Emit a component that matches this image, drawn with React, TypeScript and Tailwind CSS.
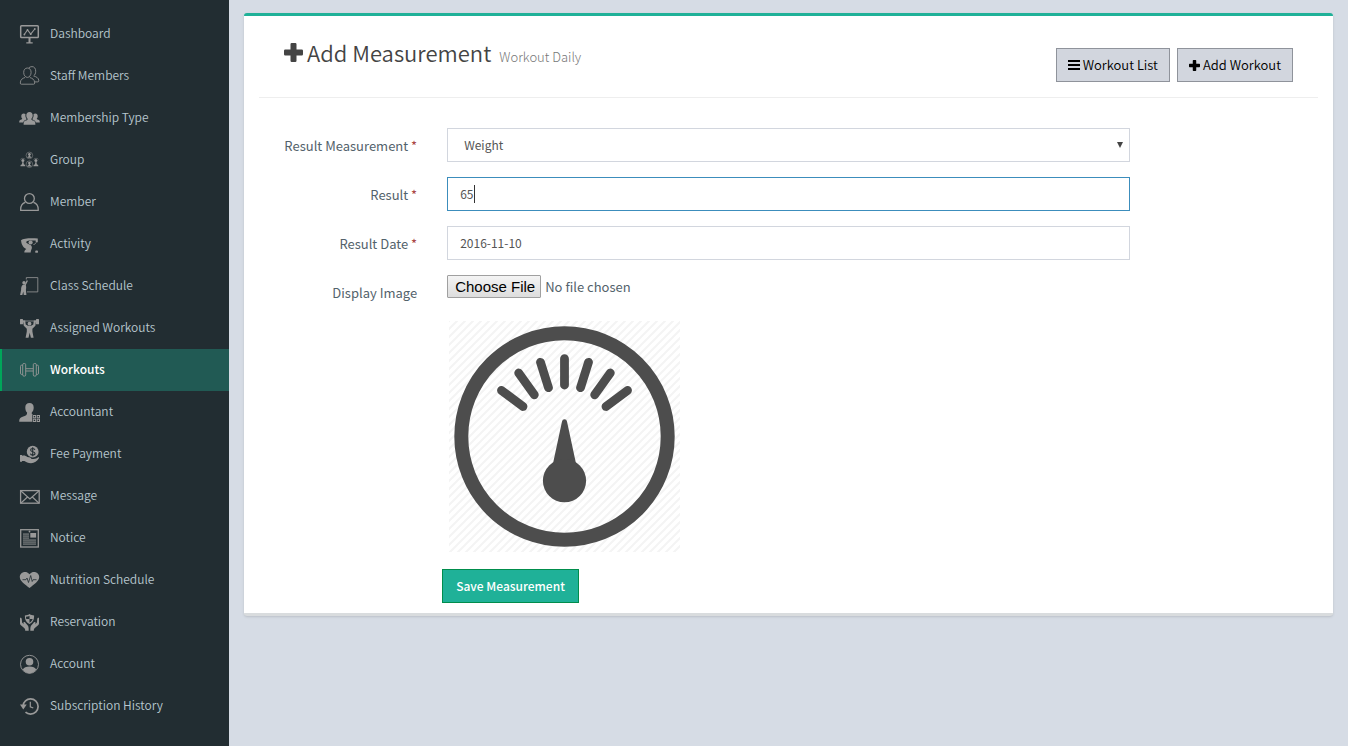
import React, { useState } from "react";

const S = { fill: "none", stroke: "currentColor" } as const;

function Icon({ children }: { children: React.ReactNode }) {
  return (
    <svg viewBox="0 0 20 20" className="h-5 w-5 shrink-0 overflow-visible text-[#999999]" fill="currentColor" aria-hidden="true">
      {children}
    </svg>
  );
}

const MiniPerson = ({ x, y }: { x: number; y: number }) => (
  <g>
    <circle cx={x} cy={y} r="3.3" {...S} strokeWidth="0.7" opacity="0.7" />
    <circle cx={x} cy={y - 1.2} r="1.3" />
    <path d={`M${x - 2} ${y + 2.4}c.2-1 .6-1.3 1.3-1.5v-1.5h1.4v1.5c.7.2 1.1.5 1.3 1.5z`} />
  </g>
);

const items: { label: string; icon: React.ReactNode }[] = [
  {
    label: "Dashboard",
    icon: (
      <>
        <rect x="0.7" y="1.7" width="17.6" height="11.8" rx="0.8" {...S} strokeWidth="1.5" />
        <path d="M4.3 10.5 7.5 6l3.2 4.2L14.8 5" {...S} strokeWidth="1.1" />
        <circle cx="4.4" cy="10.5" r="0.9" />
        <circle cx="7.5" cy="6" r="0.9" />
        <circle cx="10.7" cy="10.2" r="0.9" />
        <circle cx="14.8" cy="5" r="0.9" />
        <path d="M8.5 14h2v4.2h2.2v1.4H6.3v-1.4h2.2z" />
      </>
    ),
  },
  {
    label: "Staff Members",
    icon: (
      <g {...S} strokeWidth="0.9" opacity="0.9">
        <path d="M7.4 2c2.3 0 3.7 1.8 3.7 4.4 0 2.7-1.6 5-3.7 5S3.7 9.100 3.7 6.400C3.7 3.800 5.100 2 7.400 2z" />
        <path d="M5 11.500c-2.200.8-4.700 1.800-4.700 5.500 0 .8.3 1.200 1.100 1.200h12.200c.8 0 1.100-.4 1.100-1.200 0-3.700-2.600-4.700-4.900-5.500" />
        <path d="M8.800 1.800C9.600 1.100 10.700.6 12 .6c2.500 0 3.700 2 3.700 4.700 0 2-.8 3.700-2 4.600 2.600 1 5.100 1.900 5.100 4.900 0 .8-.4 1.100-1 1.100h-3" />
      </g>
    ),
  },
  {
    label: "Membership Type",
    icon: (
      <>
        <path d="M9.500 4c2 0 3.200 1.300 3.200 3.400 0 1.500-.6 2.800-1.500 3.500.1.900 1 1.300 2.200 1.700 1.400.5 2 1.600 2 4.200H3.600c0-2.600.6-3.700 2-4.200 1.200-.4 2.100-.8 2.200-1.700-.9-.7-1.500-2-1.500-3.500C6.300 5.300 7.500 4 9.500 4z" />
        <path d="M3.600 5.500c.8 0 1.500.3 1.900.8-.4 1.800.1 3.500 1.200 4.900-.6.800-3 .9-3.500 3.200h-4c0-1.600.5-2.200 1.600-2.600.9-.3 1.400-.6 1.400-1.200-.6-.5-.9-1.400-.9-2.400 0-1.600.9-2.700 2.300-2.700z" />
        <path d="M15.400 5.500c-.8 0-1.500.3-1.900.8.4 1.800-.1 3.500-1.200 4.900.6.800 3 .9 3.500 3.200h4c0-1.600-.5-2.200-1.600-2.600-.9-.3-1.400-.6-1.400-1.200.6-.5.9-1.400.9-2.400 0-1.600-.9-2.700-2.300-2.700z" />
      </>
    ),
  },
  {
    label: "Group",
    icon: (
      <>
        <MiniPerson x={9.4} y={5.4} />
        <MiniPerson x={9.4} y={14.2} />
        <circle cx="2.9" cy="10.4" r="1.5" />
        <path d="M.4 16.200c.1-1.300.9-1.700 1.700-1.900v-2h1.600v2c.8.200 1.600.6 1.700 1.900zM13.400 16.200c.1-1.300.9-1.700 1.700-1.900v-2h1.600v2c.8.200 1.600.6 1.700 1.900z" />
        <circle cx="15.9" cy="10.4" r="1.5" />
        <path d="M.3 9.500a3.200 3.200 0 0 1 5 0M13.500 9.500a3.200 3.200 0 0 1 5 0" {...S} strokeWidth="0.6" opacity="0.7" />
      </>
    ),
  },
  {
    label: "Member",
    icon: (
      <g {...S} strokeWidth="1.3">
        <circle cx="9.4" cy="6.5" r="4.9" />
        <path d="M5.300 10.300C2.200 11.300.7 13.900.7 17.300v1h17.500v-1c0-3.400-1.500-6-4.700-7" />
      </g>
    ),
  },
  {
    label: "Activity",
    icon: (
      <>
        <path d="M1 6.200C3.500 4.500 9 4.100 17.800 4.500v3.800h-2.100V6.500H9.200c-1 .4-2.800.5-3 1.500-.2.800.9 1.300 2.300 2 2 .8 3.400 1.700 3.400 3.500 0 1.700-1.200 2.700-1.200 5H4.300c0-1.800.6-2.600 2-3.600C2.600 13.300 1.400 9.800 1 6.200z" />
        <circle cx="10.6" cy="8.5" r="2.1" />
        <rect x="15.2" y="16.5" width="2.8" height="2.3" rx="0.9" />
        <path d="M13.500 10.500c1.100-.1 1.900-.7 2.700-2" {...S} strokeWidth="0.9" />
      </>
    ),
  },
  {
    label: "Class Schedule",
    icon: (
      <>
        <path d="M6.300 3.500V1.600h11.500v14.300H7" {...S} strokeWidth="0.8" />
        <circle cx="4" cy="6.7" r="1.7" />
        <path d="M8 4.700 5.800 9c.6 1.500.4 3.300.1 4.800l.5 5.200H3.800l-.5-3.500L2.300 19H.1l1-5C1 11.500 1.600 9.300 3 8.700l1.700-.3 2-4.200z" />
      </>
    ),
  },
  {
    label: "Assigned Workouts",
    icon: (
      <>
        <rect x="0" y="1" width="3" height="5.2" rx="0.5" />
        <rect x="16" y="1" width="3" height="5.2" rx="0.5" />
        <path d="M2 3h15" {...S} strokeWidth="0.8" />
        <circle cx="9.5" cy="5.7" r="1.9" />
        <path d="M2.900 2.500h2.300l.5 4 2.200 1.300h3.200l2.200-1.300.5-4h2.300l-.7 5.300-3 3v2.700l1.200 6.300h-2.700l-1.200-5-1.200 5H5.600l1.200-6.300v-2.700l-3-3z" />
      </>
    ),
  },
  {
    label: "Workouts",
    icon: (
      <g {...S} strokeWidth="0.9">
        <rect x="2.7" y="3.5" width="3" height="12.6" rx="1.2" />
        <rect x="13.3" y="3.5" width="3" height="12.6" rx="1.2" />
        <path d="M2.700 5.200H1.500Q.5 5.200.5 6.500v6.600q0 1.300 1 1.300h1.200M16.300 5.200h1.200q1 0 1 1.300v6.600q0 1.300-1 1.300h-1.200M5.700 8.700h7.600M5.700 11h7.600" />
      </g>
    ),
  },
  {
    label: "Accountant",
    icon: (
      <>
        <path d="M9.500 1c2.700 0 4.200 1.700 4.200 4.400 0 2.200-.7 3.900-1.900 5-.2 1.600.2 2 1.400 2.500h-1v6.800H-.8c0-3 .8-4 3.400-4.900 3.300-1.100 4.700-1.900 4.500-4.300C5.900 9.400 5.300 7.600 5.300 5.400 5.300 2.700 6.800 1 9.500 1z" />
        <g {...S} strokeWidth="1">
          <rect x="13.3" y="13.5" width="2.3" height="2.3" />
          <rect x="17.2" y="13.5" width="2.3" height="2.3" />
          <rect x="13.3" y="17.2" width="2.3" height="2.3" />
          <rect x="17.2" y="17.2" width="2.3" height="2.3" />
        </g>
      </>
    ),
  },
  {
    label: "Fee Payment",
    icon: (
      <>
        <circle cx="12.7" cy="7.7" r="5.9" />
        <path d="M14.900 5.800c-.3-.9-1.100-1.300-2.200-1.300-1.300 0-2.100.6-2.100 1.500 0 2.200 4.400 1.200 4.400 3.500 0 1-.9 1.600-2.200 1.600s-2.200-.6-2.400-1.500M12.700 3.300v9" fill="none" stroke="#222d32" strokeWidth="1.1" />
        <path d="M0 11h2v.8c2-.8 3.700-.3 5.200 1.100 2.700.2 4 .6 4.300 2h2c2 0 3.500-.7 4.600-1.600.7-.4 1.200.3.800.9-1.800 2.700-4.400 5-7.900 5-3 0-4.800-1.300-6.600-2.200H2v.8H0z" />
      </>
    ),
  },
  {
    label: "Message",
    icon: (
      <g {...S} strokeWidth="1.1">
        <rect x="0.6" y="4.6" width="18.6" height="12.6" strokeWidth="1.3" />
        <path d="m1 5 8.900 8 8.900-8M1 17l6.500-6M18.800 17l-6.500-6" />
      </g>
    ),
  },
  {
    label: "Notice",
    icon: (
      <>
        <rect x="0.7" y="1.7" width="17.6" height="17.3" {...S} strokeWidth="1.3" />
        <path d="M3 5h6v6h7v6H3z" opacity="0.4" />
        <path d="M3 6.500h6M3 8.500h6M3 10.500h6M3 12.500h13M3 14.500h13M3 16.500h13" {...S} strokeWidth="0.5" opacity="0.4" />
        <rect x="10.3" y="5" width="5.8" height="4.6" />
        <circle cx="9.5" cy="3.5" r="0.9" />
      </>
    ),
  },
  {
    label: "Nutrition Schedule",
    icon: (
      <>
        <path d="M9.500 4.200C11 2.500 12.500 2 14 2c3 0 5.200 2.200 5.200 5 0 4.200-5.200 7.300-9.700 11C5 14.300-.2 11.200-.2 7c0-2.800 2.200-5 5.200-5 1.500 0 3 .5 4.500 2.200z" />
        <path d="M2.500 9.700H6l1-1.700 1.500 4.500 2.200-7 1.500 6 .9-1.800h3.400" fill="none" stroke="#222d32" strokeWidth="0.8" />
      </>
    ),
  },
  {
    label: "Reservation",
    icon: (
      <>
        <path d="M9.500 2c1.500 1 3 1.400 4.600 1.500 0 4-.9 6.500-4.600 8.500C5.800 10 4.900 7.500 4.900 3.500 6.500 3.400 8 3 9.500 2z" />
        <path d="M9.500 4v3H6.300c-.2-.7-.3-1.400-.3-2.200 1.300-.1 2.300-.4 3.500-.8zM9.500 7h3.200c-.5 1.500-1.500 2.700-3.200 3.700z" fill="#222d32" />
        <path d="M0 5.700c1.300-.2 1.700.5 1.800 1.700l.3 3 1.700 1.900c-.5-1-.5-1.900.2-2.200.6-.3 1.200.2 1.600.8l2.200 2.700c.7.900.9 2 .9 5.100H5.200c0-1.600-.4-2.200-1.600-3.100L.9 13.300C.2 12.600 0 12 0 11zM19 5.700c-1.300-.2-1.700.5-1.800 1.700l-.3 3-1.700 1.900c.5-1 .5-1.900-.2-2.200-.6-.3-1.200.2-1.600.8l-2.200 2.700c-.7.900-.9 2-.9 5.100h3.500c0-1.600.4-2.200 1.600-3.100l2.700-2.300c.7-.7.900-1.300.9-2.300z" />
      </>
    ),
  },
  {
    label: "Account",
    icon: (
      <>
        <circle cx="9.5" cy="10.3" r="9" {...S} strokeWidth="0.9" />
        <circle cx="9.5" cy="7.7" r="3.8" />
        <path d="M2.800 15.600c1-2 3.300-3.200 6.700-3.200s5.700 1.200 6.700 3.200c-1.500 2.300-4 3.900-6.700 3.900s-5.200-1.600-6.700-3.900z" />
      </>
    ),
  },
  {
    label: "Subscription History",
    icon: (
      <>
        <path d="M3.200 9.500C3.500 5.700 6.600 2.900 10.500 2.900c4.200 0 7.600 3.400 7.600 7.600s-3.400 7.600-7.600 7.600c-2 0-3.600-.6-5-1.900" {...S} strokeWidth="1.7" />
        <path d="M0 8.400h6.700l-3.400 5.200z" />
        <path d="M10.300 5.800v5l3 1.200" {...S} strokeWidth="1.2" />
      </>
    ),
  },
];

const PlusIcon = ({ className }: { className: string }) => (
  <svg viewBox="0 0 19 19" className={className} fill="currentColor" aria-hidden="true">
    <path d="M7.700 0h3.600q1.200 0 1.200 1.200v5.300h5.300Q19 6.500 19 7.700v3.600q0 1.200-1.200 1.200h-5.300v5.300q0 1.200-1.200 1.200H7.700q-1.200 0-1.200-1.200v-5.300H1.200Q0 12.500 0 11.300V7.700q0-1.200 1.200-1.200h5.300V1.200Q6.500 0 7.700 0z" />
  </svg>
);

function Gauge() {
  return (
    <svg viewBox="0 0 231 231" className="h-[231px] w-[231px]" role="img" aria-label="Weight gauge">
      <defs>
        <pattern id="hatch" width="8" height="8" patternUnits="userSpaceOnUse">
          <path d="M-2 2 2-2M-2 10 10-2M6 10l4-4" stroke="#f4f4f4" strokeWidth="2" />
        </pattern>
      </defs>
      <rect width="231" height="231" fill="url(#hatch)" />
      <circle cx="115.5" cy="115.5" r="103.2" fill="none" stroke="#4d4d4d" strokeWidth="14" />
      <path
        d="M115.500 37.700V64M91.500 41.300l8 25.400M139.500 41.300l-8 25.400M69.700 52l15.600 21.800M161.300 52l-15.600 21.800M52.500 69.400 74 85.500M178.500 69.400 157 85.500"
        stroke="#4d4d4d"
        strokeWidth="8.8"
        strokeLinecap="round"
      />
      <path d="M113 100.500q.4-2.300 2.500-2.300t2.500 2.300l8.900 41.500h-22.800z" fill="#4d4d4d" />
      <circle cx="115.5" cy="159.7" r="21.6" fill="#4d4d4d" />
    </svg>
  );
}

const Label = ({ htmlFor, required, children }: { htmlFor: string; required?: boolean; children: string }) => (
  <label htmlFor={htmlFor} className="col-span-2 pt-2 pr-[15px] text-right text-[13px] leading-5 text-[#53626b]">
    {children}
    {required && <span className="text-[#a94442]"> *</span>}
  </label>
);

const field = "block h-[34px] w-full border border-[#d2d6de] bg-white text-xs text-[#555555] outline-none";
const topButton =
  "flex h-[34px] items-center gap-[3px] border border-[#8f939b] bg-[#d2d6de] px-[11px] text-[13px] leading-5 font-[350] text-black";

export default function App() {
  const [result, setResult] = useState("65");
  const [date, setDate] = useState("2016-11-10");
  return (
    <div className="flex min-h-screen bg-[#d6dce5] font-['Noto_Sans_CJK_SC','Noto_Sans',sans-serif] text-[#333333]">
      <nav className="w-[229px] shrink-0 bg-[#222d32] pt-[13px]">
        <ul>
          {items.map(({ label, icon }) => (
            <li key={label}>
              <a
                href="#"
                className={
                  label === "Workouts"
                    ? "flex h-[42px] items-center gap-[10px] border-l-2 border-[#00a65a] bg-[#215a54] pl-[18px] text-xs font-medium text-white"
                    : "flex h-[42px] items-center gap-[10px] border-l-2 border-transparent pl-[18px] text-xs font-[350] text-[#b8c7ce]"
                }
              >
                <Icon>{icon}</Icon>
                <span className="pb-0.5">{label}</span>
              </a>
            </li>
          ))}
        </ul>
      </nav>

      <main className="min-w-0 flex-1 px-[15px] pt-[13px]">
        <section className="rounded-[3px] border-t-[3px] border-b-[3px] border-t-[#1fb198] border-b-[#d9dcde] bg-white pb-[10px] shadow-sm">
          <header className="mx-[15px] flex h-[82px] items-start justify-between border-b border-[#eeeeee] pr-[25px] pl-[25px]">
            <h1 className="flex items-baseline pt-5 text-[22px] leading-8 font-[350] text-[#444444]">
              <PlusIcon className="mr-1 h-[19px] w-[19px]" />
              Add Measurement
              <small className="ml-2 text-[13px] font-light text-[#777777]">Workout Daily</small>
            </h1>
            <div className="flex gap-[7px] pt-8">
              <button type="button" className={topButton}>
                <svg viewBox="0 0 12 10" className="h-[10px] w-3" fill="currentColor" aria-hidden="true">
                  <path d="M0 0h12v2H0zM0 4h12v2H0zM0 8h12v2H0z" />
                </svg>
                Workout List
              </button>
              <button type="button" className={topButton}>
                <PlusIcon className="h-[11px] w-[11px]" />
                Add Workout
              </button>
            </div>
          </header>

          <form className="px-[10px] pt-[30px]" onSubmit={(e) => e.preventDefault()}>
            <div className="grid grid-cols-12 gap-y-[15px]">
              <Label htmlFor="measurement" required>Result Measurement</Label>
              <div className="relative col-span-8 px-[15px]">
                <select id="measurement" className={`${field} appearance-none px-4`}>
                  <option>Weight</option>
                </select>
                <svg viewBox="0 0 6 6" className="pointer-events-none absolute top-[14px] right-[22px] h-[6px] w-[6px]" aria-hidden="true">
                  <path d="M0 0h6L3 6z" fill="#444444" />
                </svg>
              </div>
              <span className="col-span-2" />

              <Label htmlFor="result" required>Result</Label>
              <div className="relative col-span-8 px-[15px]">
                <input
                  id="result"
                  value={result}
                  onChange={(e) => setResult(e.target.value)}
                  className="block h-[34px] w-full border border-[#3c8dbc] bg-white px-3 pb-0.5 text-xs text-[#555555] caret-transparent outline-none"
                />
                <span className="absolute top-2 left-[42px] h-[18px] w-px bg-[#333333]" />
              </div>
              <span className="col-span-2" />

              <Label htmlFor="date" required>Result Date</Label>
              <div className="col-span-8 px-[15px]">
                <input id="date" value={date} onChange={(e) => setDate(e.target.value)} className={`${field} px-3 pb-0.5`} />
              </div>
              <span className="col-span-2" />

              <Label htmlFor="image">Display Image</Label>
              <div className="col-span-8 px-[15px]">
                <input
                  id="image"
                  type="file"
                  className="block h-6 w-full text-[13px] leading-[22px] text-[#53626b] file:h-[23px] file:rounded-[1px] file:border file:border-solid file:border-[#a0a0a0] file:bg-linear-to-b file:from-[#f4f4f4] file:to-[#dddddd] file:pr-[5px] file:pl-[7px] file:font-['Liberation_Sans',sans-serif] file:text-[15px] file:leading-5 file:text-black"
                />
                <div className="mt-[22px] ml-[2px]">
                  <Gauge />
                </div>
              </div>
            </div>
            <div className="grid grid-cols-12 pt-[17px]">
              <div className="col-span-8 col-start-3 px-[10px]">
                <button
                  type="submit"
                  className="h-[34px] border border-[#008d4c] bg-[#1fb198] px-[13px] text-xs leading-5 font-medium text-white"
                >
                  Save Measurement
                </button>
              </div>
            </div>
          </form>
        </section>
      </main>
    </div>
  );
}
